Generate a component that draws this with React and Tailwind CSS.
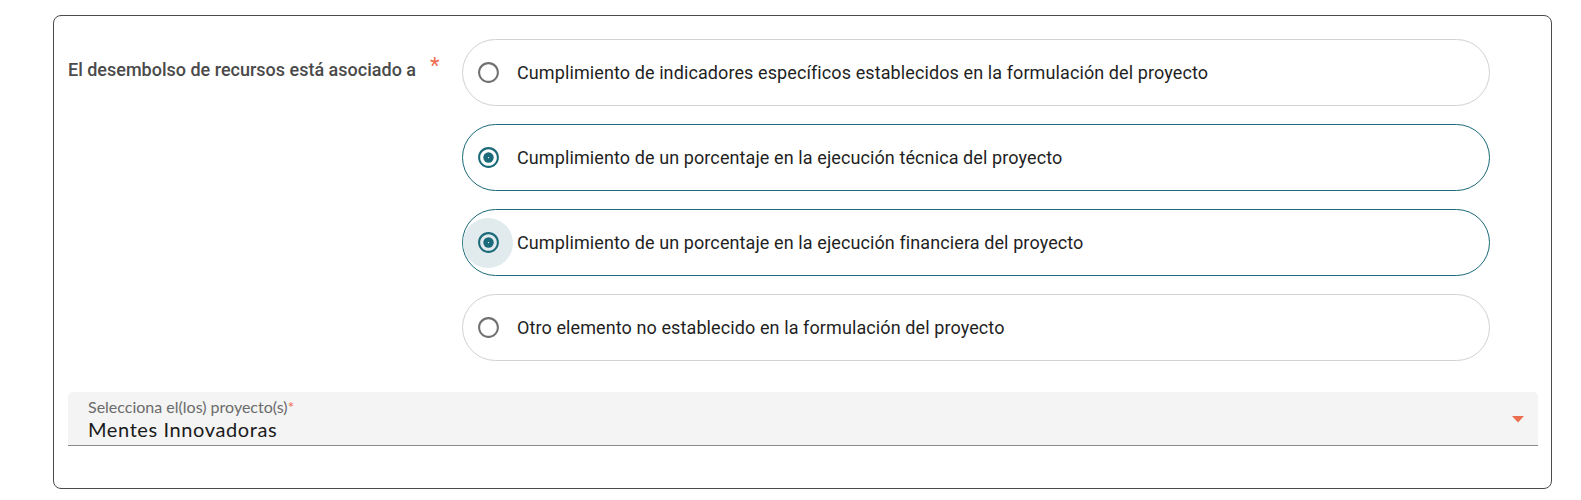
import React from "react";

const TEAL = "#1b6a79";

function RadioIcon({ checked }) {
  if (checked) {
    return (
      <svg width="25" height="25" viewBox="0 0 24 24">
        <path
          fill={TEAL}
          d="M12 2C6.48 2 2 6.48 2 12s4.48 10 10 10 10-4.48 10-10S17.52 2 12 2zm0 18c-4.42 0-8-3.58-8-8s3.58-8 8-8 8 3.58 8 8-3.58 8-8 8z"
        />
        <circle cx="12" cy="12" r="5" fill={TEAL} />
        <circle cx="12" cy="12" r="0.6" fill="#ffffff" />
      </svg>
    );
  }
  return (
    <svg width="25" height="25" viewBox="0 0 24 24">
      <path
        fill="#717171"
        d="M12 2C6.48 2 2 6.48 2 12s4.48 10 10 10 10-4.48 10-10S17.52 2 12 2zm0 18c-4.42 0-8-3.58-8-8s3.58-8 8-8 8 3.58 8 8-3.58 8-8 8z"
      />
    </svg>
  );
}

function Option({ label, checked, focused }) {
  return (
    <div
      className={
        "flex h-[67px] items-center rounded-full border " +
        (checked ? "border-[#1b6a79]" : "border-[#d2d2d2]")
      }
    >
      <div
        className={
          "flex h-[50px] w-[50px] shrink-0 items-center justify-center rounded-full " +
          (focused ? "bg-[#e1ebee]" : "")
        }
      >
        <RadioIcon checked={checked} />
      </div>
      <span className="ml-[4px] text-[18px] leading-6 tracking-[0.1px] text-[#1f1f1f] [font-family:Roboto,'Liberation_Sans',sans-serif]">
        {label}
      </span>
    </div>
  );
}

export default function App() {
  return (
    <div className="bg-white pl-[53px] pt-[15px] pb-[11px]">
      <div className="flex h-[474px] w-[1499px] flex-col rounded-lg border border-[#4a4a4a] pl-[14px] pr-[13px] pt-[23px]">
        <div className="flex">
          <div className="flex w-[394px] shrink-0 items-start pt-[19px]">
            <span className="text-[18px] font-medium leading-6 text-[#4a4a4a] [font-family:Roboto,'Liberation_Sans',sans-serif]">
              El desembolso de recursos está asociado a
            </span>
            <span className="ml-[14px] -mt-[4px] text-[22px] leading-6 text-[#ec6c52] [font-family:Roboto,'Liberation_Sans',sans-serif]">
              *
            </span>
          </div>
          <div className="flex w-[1028px] flex-col gap-[18px]">
            <Option label="Cumplimiento de indicadores específicos establecidos en la formulación del proyecto" />
            <Option checked label="Cumplimiento de un porcentaje en la ejecución técnica del proyecto" />
            <Option checked focused label="Cumplimiento de un porcentaje en la ejecución financiera del proyecto" />
            <Option label="Otro elemento no establecido en la formulación del proyecto" />
          </div>
        </div>
        <div className="mt-[31px] flex h-[54px] w-[1470px] items-center rounded-t-[5px] border-b border-[#8a8a8a] bg-[#f4f4f4] pl-[20px] pr-[14px] [font-family:Lato,'Liberation_Sans',sans-serif]">
          <div className="flex flex-1 flex-col pt-[2px]">
            <span className="text-[16px] leading-[18px] text-[#6b6b6b]">
              Selecciona el(los) proyecto(s)<span className="text-[#ec6c52]">*</span>
            </span>
            <span className="text-[20px] leading-[26px] tracking-[0.6px] text-[#1a1a1a]">Mentes Innovadoras</span>
          </div>
          <svg width="12" height="7" viewBox="0 0 12 7" className="mt-[1px]">
            <path d="M0 0h12L6 6.5z" fill="#ea6d4f" />
          </svg>
        </div>
      </div>
    </div>
  );
}
